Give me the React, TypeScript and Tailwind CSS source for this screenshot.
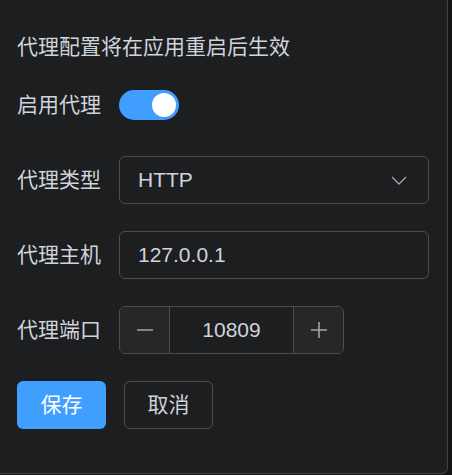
import { useState } from "react";

const font = "font-['Liberation_Sans','Noto_Sans_CJK_SC',sans-serif]";

function Field({ label, children }: { label: string; children: React.ReactNode }) {
  return (
    <div className="mt-[27px] h-[48px] flex items-center">
      <span className="w-[102px] shrink-0 text-[21px] text-[#cfd3dc]">{label}</span>
      {children}
    </div>
  );
}

export default function App() {
  const [enabled, setEnabled] = useState(true);
  const [port, setPort] = useState(10809);

  return (
    <div className={`w-[452px] h-[475px] bg-[#141414] ${font}`}>
      <div className="w-[448px] h-[474px] bg-[#1d1e1f] border-r border-b border-[#414243] rounded-br-[6px] pt-[32px] pl-[17px]">
        <div className="h-[30px] leading-[30px] text-[21px] text-[#cfd3dc]">代理配置将在应用重启后生效</div>

        <div className="mt-[19px] h-[48px] flex items-center">
          <span className="w-[102px] shrink-0 text-[21px] text-[#cfd3dc]">启用代理</span>
          <button
            onClick={() => setEnabled(!enabled)}
            className={`relative w-[60px] h-[30px] rounded-full ${enabled ? "bg-[#409eff]" : "bg-[#4c4d4f]"}`}
          >
            <span
              className={`absolute top-[3px] w-[24px] h-[24px] rounded-full bg-white ${enabled ? "right-[3px]" : "left-[3px]"}`}
            />
          </button>
        </div>

        <Field label="代理类型">
          <div className="w-[310px] h-[48px] rounded-[6px] border border-[#4c4d4f] flex items-center justify-between pl-[18px] pr-[21px]">
            <span className="text-[21px] text-[#cfd3dc]">HTTP</span>
            <svg width="16" height="9" viewBox="0 0 16 9" fill="none">
              <path d="M1 1l7 7 7-7" stroke="#a3a6ad" strokeWidth="1.3" />
            </svg>
          </div>
        </Field>

        <Field label="代理主机">
          <div className="w-[310px] h-[48px] rounded-[6px] border border-[#4c4d4f] flex items-center pl-[18px]">
            <span className="text-[21px] text-[#cfd3dc]">127.0.0.1</span>
          </div>
        </Field>

        <Field label="代理端口">
          <div className="w-[225px] h-[48px] rounded-[6px] border border-[#4c4d4f] flex overflow-hidden">
            <button
              onClick={() => setPort(port - 1)}
              className="w-[50px] bg-[#262727] border-r border-[#4c4d4f] flex items-center justify-center"
            >
              <svg width="16" height="16" viewBox="0 0 16 16">
                <path d="M0 8h16" stroke="#a3a6ad" strokeWidth="1.6" />
              </svg>
            </button>
            <div className="flex-1 flex items-center justify-center text-[21px] text-[#cfd3dc]">{port}</div>
            <button
              onClick={() => setPort(port + 1)}
              className="w-[50px] bg-[#262727] border-l border-[#4c4d4f] flex items-center justify-center"
            >
              <svg width="16" height="16" viewBox="0 0 16 16">
                <path d="M0 8h16M8 0v16" stroke="#a3a6ad" strokeWidth="1.6" />
              </svg>
            </button>
          </div>
        </Field>

        <div className="mt-[27px] h-[48px] flex items-center gap-[18px]">
          <button className="w-[89px] h-[48px] rounded-[6px] bg-[#409eff] text-white text-[21px]">保存</button>
          <button className="w-[89px] h-[48px] rounded-[6px] border border-[#4c4d4f] text-[#cfd3dc] text-[21px]">取消</button>
        </div>
      </div>
    </div>
  );
}
